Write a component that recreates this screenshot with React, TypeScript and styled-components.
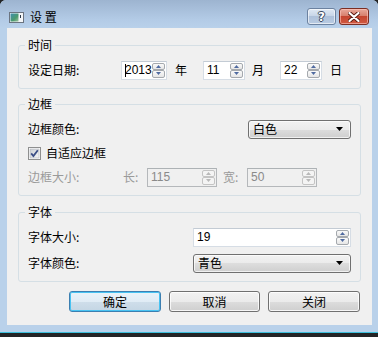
import React from "react"
import styled, { createGlobalStyle } from "styled-components"

const GlobalStyle = createGlobalStyle`
  html, body {
    margin: 0;
    padding: 0;
    background: #232425;
  }
  body {
    font-family: "Noto Sans CJK SC", "Liberation Sans", sans-serif;
    font-size: 12px;
    color: #000;
  }
  * { box-sizing: border-box; }
`

const Window = styled.div`
  width: 378px;
  height: 333px;
  display: flex;
  flex-direction: column;
  background: #b9d1ea;
  border-bottom: 1px solid #3cc0dc;
  border-radius: 6px 6px 0 0;
`

const TitleBar = styled.div`
  height: 28px;
  flex: none;
  display: flex;
  align-items: flex-start;
  padding: 0 9px 0 9px;
  background: linear-gradient(#9db4d0, #b3cbe6 70%, #b9d1ea);
  border-radius: 6px 6px 0 0;
`

const TitleIcon = styled.svg`
  margin-top: 12px;
  flex: none;
`

const TitleText = styled.span`
  margin: 9px 0 0 6px;
  line-height: 16px;
  font-size: 12px;
  letter-spacing: 0;
  word-spacing: 0;
`

const CaptionButtons = styled.div`
  margin-left: auto;
  margin-top: 8px;
  display: flex;
  gap: 3px;
`

const CaptionButton = styled.div<{ $close?: boolean }>`
  width: ${p => (p.$close ? 30 : 29)}px;
  height: 17px;
  border-radius: 3px;
  display: flex;
  align-items: center;
  justify-content: center;
  border: 1px solid ${p => (p.$close ? "#7b2e23" : "#6c82a0")};
  box-shadow: inset 0 0 0 1px ${p => (p.$close ? "rgba(255,200,190,0.6)" : "rgba(255,255,255,0.6)")};
  background: ${p =>
    p.$close
      ? "linear-gradient(#e9a99b, #d7806d 45%, #c5452f 50%, #d05a42)"
      : "linear-gradient(#e0e9f4, #c8d6e8 45%, #aec1da 50%, #b9cbe2)"};
`

const HelpGlyph = styled.span`
  font-family: "DejaVu Sans", sans-serif;
  font-weight: bold;
  font-size: 12px;
  line-height: 1;
  color: #fff;
  text-shadow: 0 0 1px #3b4a60, 1px 0 0 #3b4a60, -1px 0 0 #3b4a60, 0 1px 0 #3b4a60, 0 -1px 0 #3b4a60;
`

const Client = styled.div`
  margin: 0 6px 0 7px;
  height: 297px;
  background: #f0f0f0;
  padding: 9px 11px 0 11px;
  display: flex;
  flex-direction: column;
`

const Group = styled.fieldset<{ $top: number }>`
  margin: ${p => p.$top}px 0 0 0;
  min-width: 0;
  padding: 7px 9px 8px 9px;
  border: 1px solid #d5dfe5;
  border-radius: 3px;
  display: flex;
  flex-direction: column;
  gap: ${p => (p.$top === 8 ? 6 : 4)}px;
`

const Legend = styled.legend`
  padding: 0 3px;
  margin-left: -3px;
  line-height: 16px;
  font-size: 12px;
`

const Row = styled.div`
  height: 20px;
  display: flex;
  align-items: center;
`

const Label = styled.span<{ $w?: number; $ml?: number; $disabled?: boolean }>`
  flex: none;
  width: ${p => (p.$w ? `${p.$w}px` : "auto")};
  margin-left: ${p => p.$ml ?? 0}px;
  color: ${p => (p.$disabled ? "#9a9a9a" : "#000")};
  line-height: 16px;
  white-space: nowrap;
`

const SpinFrame = styled.div<{ $w?: number; $ml?: number; $disabled?: boolean }>`
  position: relative;
  flex: ${p => (p.$w ? "none" : "1")};
  width: ${p => (p.$w ? `${p.$w}px` : "auto")};
  margin-left: ${p => p.$ml ?? 0}px;
  height: 19px;
  display: flex;
  border: 1px solid ${p => (p.$disabled ? "#b5b8bb" : "#d6dde5")};
  border-top-color: ${p => (p.$disabled ? "#adb2b5" : "#c3cbd4")};
  background: ${p => (p.$disabled ? "#f0f0f0" : "#fff")};
  padding: 1px;
`

const SpinText = styled.span<{ $disabled?: boolean }>`
  flex: 1;
  padding-left: 2px;
  font-family: "Liberation Sans", "Noto Sans CJK SC", sans-serif;
  font-size: 12px;
  line-height: 15px;
  color: ${p => (p.$disabled ? "#8a8a8a" : "#000")};
`

const Caret = styled.span`
  position: absolute;
  left: 3px;
  top: 2px;
  width: 1px;
  height: 13px;
  background: #000;
`

const SpinArrows = styled.div`
  width: 13px;
  flex: none;
  display: flex;
  flex-direction: column;
`

const SpinArrow = styled.div<{ $disabled?: boolean }>`
  flex: 1;
  display: flex;
  align-items: center;
  justify-content: center;
  border: 1px solid ${p => (p.$disabled ? "#c4c4c4" : "#a5a9ae")};
  border-radius: 2px;
  background: ${p => (p.$disabled ? "#f4f4f4" : "linear-gradient(#fafafa, #e6e6e6)")};
`

const Combo = styled.div<{ $w?: number }>`
  flex: ${p => (p.$w ? "none" : "1")};
  width: ${p => (p.$w ? `${p.$w}px` : "auto")};
  margin-left: ${p => (p.$w ? "auto" : "0")};
  height: 19px;
  display: flex;
  align-items: center;
  padding: 0 7px 0 4px;
  border: 1px solid #707070;
  border-radius: 3px;
  box-shadow: inset 0 0 0 1px rgba(255, 255, 255, 0.7);
  background: linear-gradient(#f2f2f2, #ebebeb 50%, #dddddd 50%, #cfcfcf);
  line-height: 16px;
`

const ComboArrow = styled.svg`
  margin-left: auto;
  flex: none;
`

const CheckRow = styled.label`
  display: flex;
  align-items: center;
  gap: 5px;
  line-height: 16px;
`

const Buttons = styled.div`
  margin-top: 9px;
  padding-right: 1px;
  display: flex;
  justify-content: flex-end;
  gap: 8px;
`

const Button = styled.button<{ $w: number; $default?: boolean }>`
  width: ${p => p.$w}px;
  height: 21px;
  padding: 0;
  font-family: "Noto Sans CJK SC", "Liberation Sans", sans-serif;
  font-size: 12px;
  line-height: 16px;
  color: #000;
  border-radius: 3px;
  border: 1px solid ${p => (p.$default ? "#3c7fb1" : "#707070")};
  box-shadow: inset 0 0 0 1px ${p => (p.$default ? "#48c3f2" : "rgba(255,255,255,0.8)")};
  background: ${p =>
    p.$default
      ? "linear-gradient(#eaf3f9, #e0ecf5 50%, #cfdeea 50%, #c4d6e4)"
      : "linear-gradient(#f2f2f2, #ebebeb 50%, #dddddd 50%, #cfcfcf)"};
`

function Triangle({ up, disabled }: { up?: boolean; disabled?: boolean }) {
  const color = disabled ? "#b8b8b8" : "#4f6aa0"
  return (
    <svg width="5" height="3" viewBox="0 0 5 3">
      <path d={up ? "M2.5 0 L5 3 L0 3 Z" : "M0 0 L5 0 L2.5 3 Z"} fill={color} />
    </svg>
  )
}

function SpinBox({
  value,
  w,
  ml,
  disabled,
  caret,
}: {
  value: string
  w?: number
  ml?: number
  disabled?: boolean
  caret?: boolean
}) {
  return (
    <SpinFrame $w={w} $ml={ml} $disabled={disabled}>
      <SpinText $disabled={disabled}>{value}</SpinText>
      {caret && <Caret />}
      <SpinArrows>
        <SpinArrow $disabled={disabled}>
          <Triangle up disabled={disabled} />
        </SpinArrow>
        <SpinArrow $disabled={disabled}>
          <Triangle disabled={disabled} />
        </SpinArrow>
      </SpinArrows>
    </SpinFrame>
  )
}

function ComboBox({ value, w }: { value: string; w?: number }) {
  return (
    <Combo $w={w}>
      {value}
      <ComboArrow width="7" height="4" viewBox="0 0 7 4">
        <path d="M0 0 L7 0 L3.5 4 Z" fill="#000" />
      </ComboArrow>
    </Combo>
  )
}

function CheckBox() {
  return (
    <svg width="13" height="13" viewBox="0 0 13 13">
      <defs>
        <linearGradient id="cb" x1="0" y1="0" x2="1" y2="1">
          <stop offset="0" stopColor="#cbcfd5" />
          <stop offset="1" stopColor="#f6f6f6" />
        </linearGradient>
      </defs>
      <rect x="0.5" y="0.5" width="12" height="12" fill="#fff" stroke="#8e8f8f" />
      <rect x="2" y="2" width="9" height="9" fill="url(#cb)" stroke="#aeb3b9" strokeWidth="0.6" />
      <path d="M3.2 6.4 L5.4 9 L9.8 3.2" fill="none" stroke="#3b4e86" strokeWidth="1.8" />
    </svg>
  )
}

export default function App() {
  return (
    <>
      <GlobalStyle />
      <Window>
        <TitleBar>
          <TitleIcon width="15" height="11" viewBox="0 0 15 11">
            <defs>
              <linearGradient id="ic" x1="0" y1="0" x2="1" y2="1">
                <stop offset="0" stopColor="#3f8fb0" />
                <stop offset="0.6" stopColor="#4a9a6e" />
                <stop offset="1" stopColor="#9fc3a0" />
              </linearGradient>
            </defs>
            <rect x="0.5" y="0.5" width="14" height="10" fill="#f4f6f8" stroke="#6b7480" />
            <rect x="1.5" y="1.5" width="8" height="8" fill="url(#ic)" />
            <rect x="11" y="3" width="1" height="3" fill="#2b3a4a" />
          </TitleIcon>
          <TitleText>设&nbsp;置</TitleText>
          <CaptionButtons>
            <CaptionButton>
              <HelpGlyph>?</HelpGlyph>
            </CaptionButton>
            <CaptionButton $close>
              <svg width="12" height="10" viewBox="0 0 12 10">
                <path
                  d="M1.5 1 L10.5 9 M10.5 1 L1.5 9"
                  stroke="#5a1c12"
                  strokeWidth="4"
                  strokeLinecap="round"
                />
                <path d="M1.5 1 L10.5 9 M10.5 1 L1.5 9" stroke="#fff" strokeWidth="2.2" strokeLinecap="round" />
              </svg>
            </CaptionButton>
          </CaptionButtons>
        </TitleBar>
        <Client>
          <Group $top={0}>
            <Legend>时间</Legend>
            <Row>
              <Label $w={93}>设定日期:</Label>
              <SpinBox value="2013" w={46} caret />
              <Label $ml={8}>年</Label>
              <SpinBox value="11" w={42} ml={16} />
              <Label $ml={7}>月</Label>
              <SpinBox value="22" w={42} ml={16} />
              <Label $ml={8}>日</Label>
            </Row>
          </Group>

          <Group $top={7}>
            <Legend>边框</Legend>
            <Row>
              <Label>边框颜色:</Label>
              <ComboBox value="白色" w={103} />
            </Row>
            <Row>
              <CheckRow>
                <CheckBox />
                自适应边框
              </CheckRow>
            </Row>
            <Row>
              <Label $w={95} $disabled>
                边框大小:
              </Label>
              <Label $w={24} $disabled>
                长:
              </Label>
              <SpinBox value="115" w={70} disabled />
              <Label $w={24} $ml={6} $disabled>
                宽:
              </Label>
              <SpinBox value="50" w={70} disabled />
            </Row>
          </Group>

          <Group $top={8}>
            <Legend>字体</Legend>
            <Row>
              <Label $w={165}>字体大小:</Label>
              <SpinBox value="19" />
            </Row>
            <Row>
              <Label $w={165}>字体颜色:</Label>
              <ComboBox value="青色" />
            </Row>
          </Group>

          <Buttons>
            <Button $w={92} $default>
              确定
            </Button>
            <Button $w={91}>取消</Button>
            <Button $w={92}>关闭</Button>
          </Buttons>
        </Client>
      </Window>
    </>
  )
}
